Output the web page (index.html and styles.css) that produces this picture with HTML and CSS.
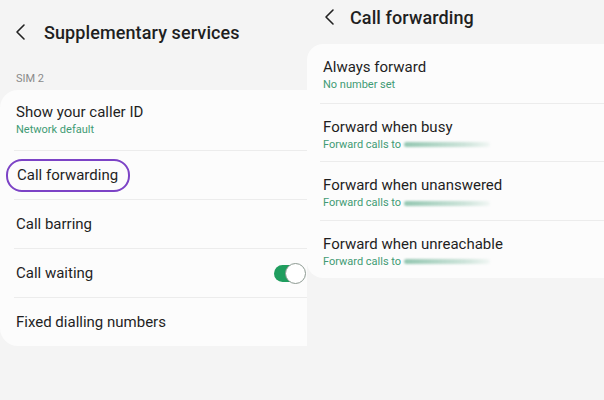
FILE: index.html
```html
<!DOCTYPE html>
<html lang="en">
<head>
  <meta charset="UTF-8">
  <title>Supplementary services - Call forwarding</title>
  <link rel="stylesheet" href="styles.css">
</head>
<body>
  <div class="shots">
    <!-- Экран 1: дополнительные услуги -->
    <section class="screen screen-left">
      <header class="appbar">
        <svg class="back" width="12" height="18" viewBox="0 0 12 18"><path d="M9 2 L2 9 L9 16" fill="none" stroke="#222" stroke-width="1.6" stroke-linecap="round" stroke-linejoin="round"/></svg>
        <h1>Supplementary services</h1>
      </header>
      <div class="group-label">SIM 2</div>
      <div class="card card-left">
        <div class="row row-two">
          <div class="row-title">Show your caller ID</div>
          <div class="row-sub">Network default</div>
        </div>
        <div class="row">
          <span class="row-title marked">Call forwarding</span>
        </div>
        <div class="row">
          <span class="row-title">Call barring</span>
        </div>
        <div class="row row-switch">
          <span class="row-title">Call waiting</span>
          <span class="switch"><span class="knob"></span></span>
        </div>
        <div class="row">
          <span class="row-title">Fixed dialling numbers</span>
        </div>
      </div>
    </section>

    <!-- Экран 2: переадресация -->
    <section class="screen screen-right">
      <header class="appbar appbar-small">
        <svg class="back" width="12" height="18" viewBox="0 0 12 18"><path d="M9 2 L2 9 L9 16" fill="none" stroke="#222" stroke-width="1.6" stroke-linecap="round" stroke-linejoin="round"/></svg>
        <h1>Call forwarding</h1>
      </header>
      <div class="card card-right">
        <div class="frow">
          <div class="row-title">Always forward</div>
          <div class="row-sub">No number set</div>
        </div>
        <div class="frow">
          <div class="row-title">Forward when busy</div>
          <div class="row-sub">Forward calls to <span class="hidden-num"></span></div>
        </div>
        <div class="frow">
          <div class="row-title">Forward when unanswered</div>
          <div class="row-sub">Forward calls to<span class="hidden-num"></span></div>
        </div>
        <div class="frow">
          <div class="row-title">Forward when unreachable</div>
          <div class="row-sub">Forward calls to <span class="hidden-num"></span></div>
        </div>
      </div>
    </section>
  </div>
</body>
</html>
```

FILE: styles.css
```css
/* Базовые стили */
:root {
  --bg: #f4f4f4;
  --card: #fcfcfc;
  --text: #1f1f1f;
  --green: #3f9b74;
  --divider: #ececec;
  --purple: #7c43c6;
}
* {
  box-sizing: border-box;
}
body {
  margin: 0;
  background: var(--bg);
  font-family: Roboto, "Noto Sans", sans-serif;
  color: var(--text);
  width: 604px;
  height: 400px;
  overflow: hidden;
}
.shots {
  display: grid;
  grid-template-columns: 307px 297px;
  height: 400px;
}
.screen {
  background: var(--bg);
  overflow: hidden;
}
/* Шапка */
.appbar {
  height: 64px;
  display: flex;
  align-items: center;
  padding-left: 15px;
}
.appbar h1 {
  margin: 0 0 0 17px;
  font-size: 18px;
  font-weight: 500;
  letter-spacing: 0.1px;
}
.appbar-small {
  height: 34px;
  padding-left: 17px;
}
.appbar-small h1 {
  margin-left: 14px;
}
.group-label {
  padding: 8px 16px 0;
  height: 26px;
  font-size: 11px;
  color: #8a8a8a;
}
/* Карточки */
.card {
  background: var(--card);
}
.card-left {
  border-radius: 18px 0 0 18px;
}
.card-right {
  margin-top: 10px;
  border-radius: 16px 0 0 16px;
}
.row {
  height: 49px;
  display: flex;
  align-items: center;
  padding: 0 0 0 2px;
  margin-left: 14px;
  border-top: 1px solid var(--divider);
}
.row-two {
  height: 60px;
  flex-direction: column;
  align-items: flex-start;
  justify-content: center;
  border-top: none;
}
.row-title {
  font-size: 15px;
  line-height: 19px;
}
.row-sub {
  font-size: 11px;
  line-height: 15px;
  color: var(--green);
  display: flex;
  align-items: center;
}
.marked {
  border: 2.5px solid var(--purple);
  border-radius: 16px;
  padding: 5px 10px 5px 9px;
  margin-left: -10px;
}
.row-switch {
  justify-content: space-between;
}
/* Переключатель */
.switch {
  position: relative;
  width: 31px;
  height: 17px;
  border-radius: 9px;
  background: #1f9d5e;
  margin-right: 2px;
}
.switch .knob {
  position: absolute;
  right: -1px;
  top: -2px;
  width: 21px;
  height: 21px;
  border-radius: 50%;
  background: #fff;
  border: 1.5px solid #8d9a92;
}
/* Переадресация */
.frow {
  height: 58.5px;
  padding: 13px 0 0 3px;
  margin-left: 13px;
  border-top: 1px solid var(--divider);
}
.frow:first-child {
  border-top: none;
}
.frow .row-title {
  line-height: 20px;
}
.frow .row-sub {
  line-height: 16px;
}
.hidden-num {
  display: inline-block;
  width: 86px;
  height: 5px;
  margin-left: 3px;
  border-radius: 3px;
  background: linear-gradient(to right, rgba(63, 155, 116, 0.55), rgba(63, 155, 116, 0.25) 70%, rgba(63, 155, 116, 0.05));
  filter: blur(1px);
}
```
